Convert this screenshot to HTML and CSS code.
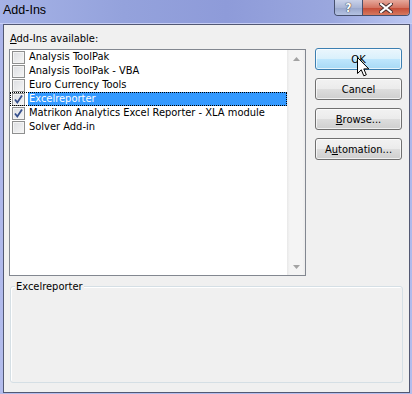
FILE: index.html
```html
<!DOCTYPE html>
<html lang="en">
<head>
    <meta charset="UTF-8">
    <title>Add-Ins</title>
    <link rel="stylesheet" href="styles.css">
</head>
<body>
    <div class="window">
        <div class="titlebar">
            <span class="title">Add-Ins</span>
            <div class="caption-buttons">
                <span class="help">?</span>
                <span class="close">
                    <svg width="14" height="10" viewBox="0 0 14 10">
                        <path d="M2 1 L12 9 M12 1 L2 9" stroke="#4a3030" stroke-width="4" stroke-linecap="square"/>
                        <path d="M2 1 L12 9 M12 1 L2 9" stroke="#ffffff" stroke-width="2" stroke-linecap="square"/>
                    </svg>
                </span>
            </div>
        </div>
        <div class="client">
            <div class="top">
                <div class="left">
                    <label class="list-label"><u>A</u>dd-Ins available:</label>
                    <div class="listbox">
                        <ul class="items">
                            <li class="item"><span class="check"></span><span class="name">Analysis ToolPak</span></li>
                            <li class="item"><span class="check"></span><span class="name">Analysis ToolPak - VBA</span></li>
                            <li class="item"><span class="check"></span><span class="name">Euro Currency Tools</span></li>
                            <li class="item selected">
                                <span class="check"><svg width="11" height="11" viewBox="0 0 11 11"><path d="M2 5.5 L4.3 8.5 L9 1.5" fill="none" stroke="#354f8c" stroke-width="1.8"/></svg></span>
                                <span class="name">Excelreporter</span>
                            </li>
                            <li class="item">
                                <span class="check"><svg width="11" height="11" viewBox="0 0 11 11"><path d="M2 5.5 L4.3 8.5 L9 1.5" fill="none" stroke="#354f8c" stroke-width="1.8"/></svg></span>
                                <span class="name">Matrikon Analytics Excel Reporter - XLA module</span>
                            </li>
                            <li class="item"><span class="check"></span><span class="name">Solver Add-in</span></li>
                        </ul>
                        <div class="scrollbar">
                            <span class="scroll-btn"><svg width="7" height="4" viewBox="0 0 7 4"><path d="M3.5 0 L7 4 L0 4 Z" fill="#a3a3a3"/></svg></span>
                            <span class="scroll-btn"><svg width="7" height="4" viewBox="0 0 7 4"><path d="M0 0 L7 0 L3.5 4 Z" fill="#a3a3a3"/></svg></span>
                        </div>
                    </div>
                </div>
                <div class="buttons">
                    <button class="btn default">OK</button>
                    <button class="btn">Cancel</button>
                    <button class="btn"><u>B</u>rowse...</button>
                    <button class="btn">A<u>u</u>tomation...</button>
                </div>
            </div>
            <div class="group">
                <span class="group-title">Excelreporter</span>
            </div>
        </div>
        <svg class="cursor" width="13" height="21" viewBox="0 0 13 21">
            <path d="M0.5 0.5 L0.5 16.5 L4.3 12.8 L6.8 18.8 L9.3 17.8 L6.8 11.9 L11.8 11.9 Z" fill="#ffffff" stroke="#000000" stroke-width="1" stroke-linejoin="miter"/>
        </svg>
    </div>
</body>
</html>
```

FILE: styles.css
```css
html, body {
    margin: 0;
    padding: 0;
}

body {
    width: 412px;
    height: 394px;
    overflow: hidden;
    font-family: "DejaVu Sans Condensed", "Liberation Sans", Arial, sans-serif;
    font-size: 11px;
    color: #000;
}

.window {
    position: relative;
    display: flex;
    flex-direction: column;
    width: 412px;
    height: 394px;
    padding: 0 2px 1px 3px;
    box-sizing: border-box;
    background: linear-gradient(to bottom, #aab4ea, #b3bcec);
}

/* title bar */

.titlebar {
    display: flex;
    justify-content: space-between;
    height: 24px;
    margin: 0 -2px 0 -3px;
    box-sizing: border-box;
    border-bottom: 1px solid #c8cff5;
    background: linear-gradient(to right, #a5b2e6 0%, #94a2dc 30%, #8e9bd9 55%, #9aa7de 80%, #bcc7f2 100%);
}

.title {
    padding-left: 3px;
    font-family: "Liberation Sans", Arial, sans-serif;
    font-size: 12.5px;
    line-height: 20px;
}

.caption-buttons {
    display: flex;
    height: 15px;
    margin-right: 2px;
    border: 1px solid #46506e;
    border-top: none;
    border-radius: 0 0 4px 4px;
    overflow: hidden;
}

.help,
.close {
    display: flex;
    align-items: center;
    justify-content: center;
}

.help {
    width: 27px;
    border-right: 1px solid #46506e;
    background: linear-gradient(to bottom, #c9d2ea, #aab6d6 50%, #98a6cb 51%, #b4c2e2);
    color: #fff;
    font-size: 12px;
    font-weight: bold;
    text-shadow: 0 0 1px #333, 0 0 1px #333;
}

.close {
    width: 46px;
    background: linear-gradient(to bottom, #e6a99c, #d47563 50%, #c44a35 51%, #d6785f);
}

/* client area */

.client {
    flex: 1;
    display: flex;
    flex-direction: column;
    padding: 0 6px 9px 5px;
    border: 1px solid #525873;
    background: #f0f0f0;
}

.top {
    display: flex;
}

.left {
    width: 297px;
}

.list-label {
    display: block;
    height: 13px;
    padding: 7px 0 0 1px;
    margin-bottom: 4px;
    line-height: 13px;
}

.listbox {
    display: flex;
    height: 227px;
    box-sizing: border-box;
    border: 1px solid #828790;
    background: #fff;
}

.items {
    flex: 1;
    margin: 0;
    padding: 0;
    list-style: none;
}

.item {
    display: flex;
    align-items: center;
    height: 14px;
    padding-left: 2px;
    line-height: 14px;
    white-space: nowrap;
}

.item.selected {
    outline: 1px dotted #000;
    outline-offset: -1px;
}

.check {
    display: flex;
    align-items: center;
    justify-content: center;
    width: 13px;
    height: 13px;
    box-sizing: border-box;
    margin-right: 3px;
    border: 1px solid #8e8f8f;
    background: linear-gradient(135deg, #dcdee2, #f6f6f6);
    box-shadow: inset 0 0 0 1px #f4f4f4;
}

.name {
    flex: 1;
    padding: 0 1px;
}

.selected .name {
    background: #3399ff;
    color: #fff;
}

.scrollbar {
    display: flex;
    flex-direction: column;
    justify-content: space-between;
    width: 18px;
    background: linear-gradient(to right, #e8e8e8, #f4f4f4 15%, #f4f4f4 85%, #ececec);
}

.scroll-btn {
    display: flex;
    align-items: center;
    justify-content: center;
    height: 17px;
}

/* command buttons */

.buttons {
    display: flex;
    flex-direction: column;
    gap: 8px;
    width: 87px;
    margin: 23px 1px 0 9px;
}

.btn {
    height: 22px;
    padding: 0;
    box-sizing: border-box;
    border: 1px solid #707070;
    border-radius: 3px;
    background: linear-gradient(to bottom, #f2f2f2 0%, #ebebeb 50%, #dddddd 51%, #cfcfcf 100%);
    box-shadow: inset 0 0 0 1px rgba(255, 255, 255, 0.7);
    font-family: "DejaVu Sans Condensed", "Liberation Sans", Arial, sans-serif;
    font-size: 11px;
    color: #000;
}

.btn.default {
    border-color: #3c7fb1;
    background: linear-gradient(to bottom, #eaf6fd 0%, #d9f0fc 50%, #bee6fd 51%, #a7d9f5 100%);
}

/* description group */

.group {
    position: relative;
    flex: 1;
    margin: 10px 0 0 1px;
    border: 1px solid #d5dfe5;
    border-radius: 3px;
    box-shadow: inset 1px 1px 0 #fff;
}

.group-title {
    position: absolute;
    top: -7px;
    left: 4px;
    padding: 0 1px;
    line-height: 13px;
    background: #f0f0f0;
}

.cursor {
    position: absolute;
    left: 357px;
    top: 57px;
}
```
